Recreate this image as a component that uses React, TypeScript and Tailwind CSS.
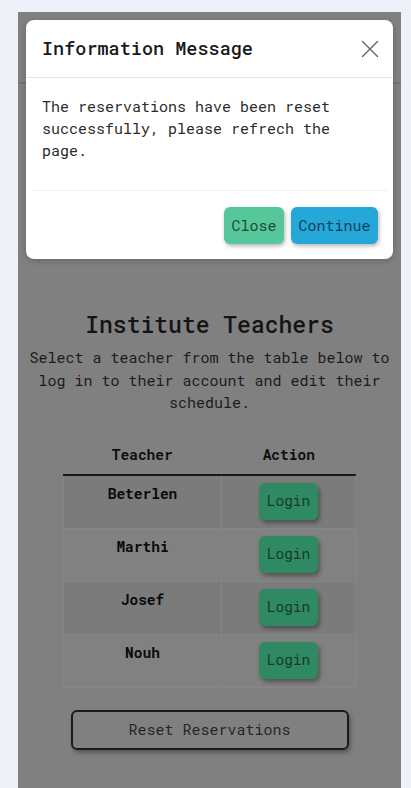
import { X } from 'lucide-react';

const teachers = ['Beterlen', 'Marthi', 'Josef', 'Nouh'];

const mono = { fontFamily: '"Roboto Mono", "DejaVu Sans Mono", monospace' };

export default function App() {
    return (
        <div className="min-h-screen bg-[#eef1f7] pt-[12px] pl-[18px] pr-[10px]" style={mono}>
            <div className="relative min-h-[776px] bg-[#808080]">
                <header className="h-[72px] border-b-2 border-[#737373]" />

                <main className="flex flex-col items-center px-[6px]">
                    <h1 className="mt-[226px] text-[23px] leading-[28px] font-medium text-[#141414]">
                        Institute Teachers
                    </h1>
                    <p className="mt-[8px] text-center text-[15px] leading-[22.5px] text-[#1c1c1c]">
                        Select a teacher from the table below to log in to their account and edit their schedule.
                    </p>

                    <table className="mt-[23px] w-[293px] border-collapse">
                        <thead>
                            <tr className="h-[38px]">
                                <th className="w-[158px] border-r border-[#858585] border-b-2 border-b-[#1a1a1a] text-[14.5px] font-bold text-[#0f0f0f]">
                                    Teacher
                                </th>
                                <th className="border-b-2 border-b-[#1a1a1a] text-[14.5px] font-bold text-[#0f0f0f]">
                                    Action
                                </th>
                            </tr>
                        </thead>
                        <tbody>
                            {teachers.map((name, i) => (
                                <tr key={name} className={i % 2 === 0 ? 'bg-[#7b7b7b]' : 'bg-[#818181]'}>
                                    <td className="border border-[#868686] px-2 pt-2 pb-[7px] text-center align-top text-[14.5px] leading-[20px] font-bold text-[#0a0a0a]">
                                        {name}
                                    </td>
                                    <td className="border border-[#868686] px-2 pt-[7px] pb-[8px] text-center align-top">
                                        <button className="h-[37px] w-[59px] rounded-md bg-[#2f8a63] text-[14.5px] text-[#173a2b] shadow-[2px_3px_4px_rgba(0,0,0,0.35)]">
                                            Login
                                        </button>
                                    </td>
                                </tr>
                            ))}
                        </tbody>
                    </table>

                    <button className="mt-[22px] h-[40px] w-[278px] rounded-md border-2 border-[#1a1a1a] text-[15px] text-[#262626] shadow-[2px_3px_4px_rgba(0,0,0,0.3)]">
                        Reset Reservations
                    </button>
                </main>

                {/* modal over the page */}
                <div className="absolute left-[8px] right-[8px] top-[8px] rounded-lg bg-white shadow-[0_2px_6px_rgba(0,0,0,0.2)]">
                    <div className="flex h-[58px] items-center justify-between border-b border-[#e4e4e4] pl-4 pr-[8px]">
                        <h2 className="text-[18.5px] font-medium text-[#1a1a1a]">Information Message</h2>
                        <X className="h-[30px] w-[30px] text-[#666]" strokeWidth={1.1} />
                    </div>
                    <div className="mx-[6px] border-b border-[#f0f0f0] px-[10px] pt-[17px] pb-[29px]">
                        <p className="w-[300px] text-[15px] leading-[22px] text-[#2b2b2b]">
                            The reservations have been reset successfully, please refrech the page.
                        </p>
                    </div>
                    <div className="flex justify-end gap-[7px] pt-[16px] pr-[15px] pb-[15px]">
                        <button className="h-[37px] w-[60px] rounded-md bg-[#55c79a] text-[15px] text-[#1d4a37] shadow-[1px_2px_4px_rgba(0,0,0,0.3)]">
                            Close
                        </button>
                        <button className="h-[37px] w-[87px] rounded-md bg-[#25a8d8] text-[15px] text-[#0f3f5e] shadow-[1px_2px_4px_rgba(0,0,0,0.3)]">
                            Continue
                        </button>
                    </div>
                </div>
            </div>
        </div>
    );
}
